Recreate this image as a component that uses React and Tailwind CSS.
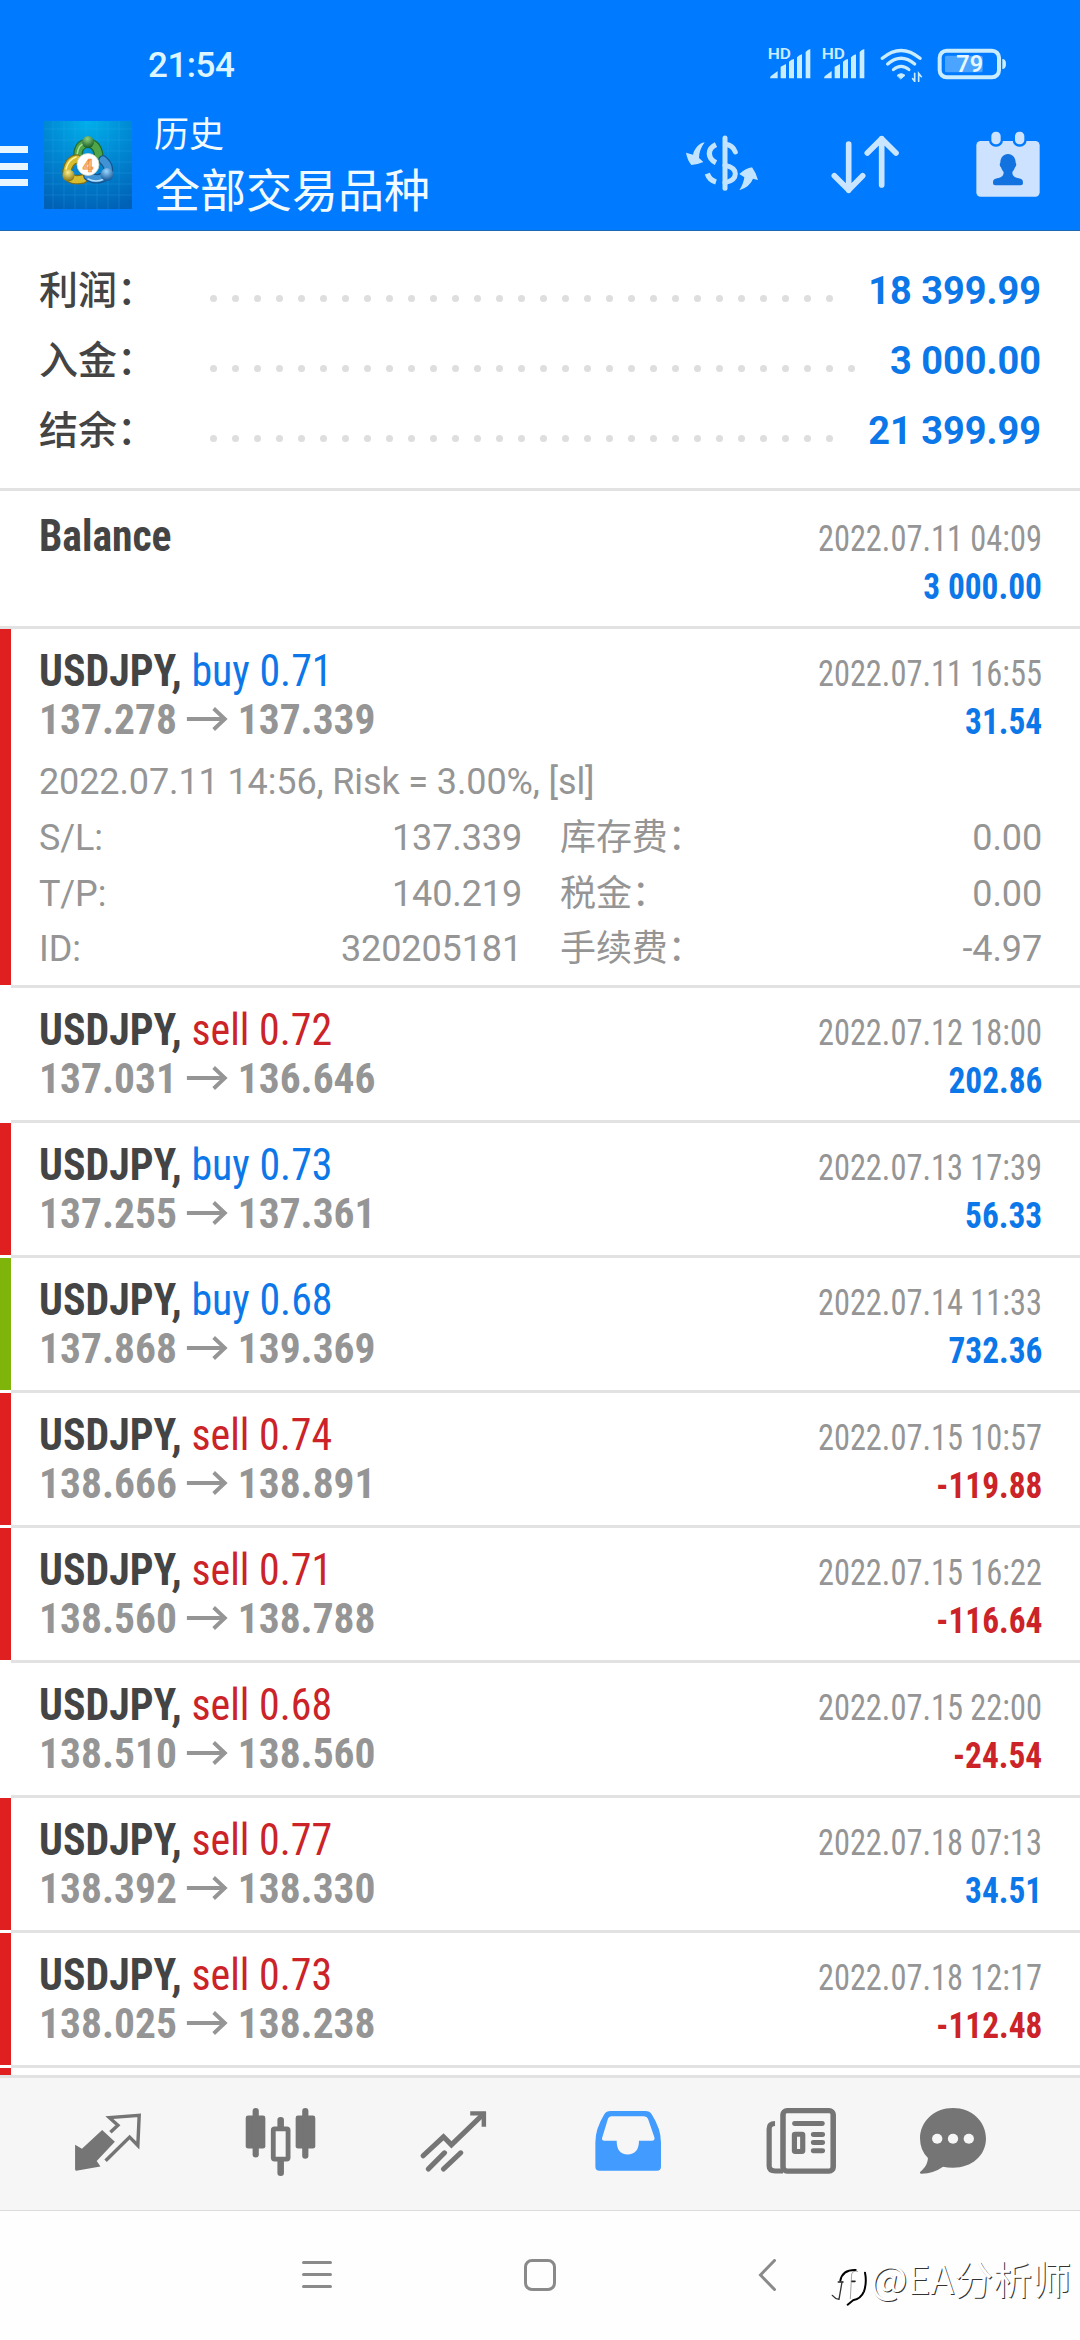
const summary = [
    { label: "利润：", value: "18 399.99", dots: 29 },
    { label: "入金：", value: "3 000.00", dots: 30 },
    { label: "结余：", value: "21 399.99", dots: 29 },
];

const deals = [
    {
        symbol: "USDJPY", side: "buy", lots: "0.71", open: "137.278", close: "137.339", time: "2022.07.11 16:55", profit: "31.54", mark: "red",
        comment: "2022.07.11 14:56, Risk = 3.00%, [sl]",
        details: [
            ["S/L:", "137.339", "库存费：", "0.00"],
            ["T/P:", "140.219", "税金：", "0.00"],
            ["ID:", "320205181", "手续费：", "-4.97"],
        ],
    },
    { symbol: "USDJPY", side: "sell", lots: "0.72", open: "137.031", close: "136.646", time: "2022.07.12 18:00", profit: "202.86" },
    { symbol: "USDJPY", side: "buy", lots: "0.73", open: "137.255", close: "137.361", time: "2022.07.13 17:39", profit: "56.33", mark: "red" },
    { symbol: "USDJPY", side: "buy", lots: "0.68", open: "137.868", close: "139.369", time: "2022.07.14 11:33", profit: "732.36", mark: "green" },
    { symbol: "USDJPY", side: "sell", lots: "0.74", open: "138.666", close: "138.891", time: "2022.07.15 10:57", profit: "-119.88", mark: "red" },
    { symbol: "USDJPY", side: "sell", lots: "0.71", open: "138.560", close: "138.788", time: "2022.07.15 16:22", profit: "-116.64", mark: "red" },
    { symbol: "USDJPY", side: "sell", lots: "0.68", open: "138.510", close: "138.560", time: "2022.07.15 22:00", profit: "-24.54" },
    { symbol: "USDJPY", side: "sell", lots: "0.77", open: "138.392", close: "138.330", time: "2022.07.18 07:13", profit: "34.51", mark: "red" },
    { symbol: "USDJPY", side: "sell", lots: "0.73", open: "138.025", close: "138.238", time: "2022.07.18 12:17", profit: "-112.48", mark: "red" },
];

const markColors = {
    red: "bg-[#e02020]",
    green: "bg-[#7fb50b]",
};

function Signal() {
    return (
        <svg className="w-[43px] h-9" viewBox="0 0 129 108" fill="#c9ecff">
            <text x="-1" y="39" fontSize="46" fontWeight="600" textLength="70" lengthAdjust="spacingAndGlyphs" fontFamily="Roboto">HD</text>
            <path d="M6 97 Q6 90 14 86 L29 75 V97Z" />
            <path d="M38 62 L54 54 V97 H38Z" />
            <path d="M63 47 Q70 40 78 39 V97 H63Z" />
            <path d="M87 34 Q94 26 102 25 V97 H87Z" />
            <path d="M113 18 Q119 10 127 9 V97 H113Z" />
        </svg>
    );
}

function Wifi() {
    return (
        <svg className="w-[43px] h-9" viewBox="0 0 129 108" fill="none" stroke="#c9ecff" strokeWidth="10" strokeLinecap="round">
            <path d="M7 37 Q63 -10 120 37" />
            <path d="M23 54 Q63 20 104 54" />
            <path d="M40 71 Q63 51 87 71" strokeWidth="9" />
            <path d="M52 88 Q63 78 75 88 L63 98Z" fill="#c9ecff" strokeWidth="3" />
            <path d="M104 82 V106 L98 98 M116 106 V82 L124 92" strokeWidth="5" />
        </svg>
    );
}

function Battery() {
    return (
        <svg className="w-[70px] h-9" viewBox="0 0 210 108">
            <rect x="8" y="14" width="178" height="80" rx="21" fill="none" stroke="#c9ecff" strokeWidth="12" />
            <rect x="24" y="29" width="113" height="50" rx="5" fill="#4ba4ff" />
            <path d="M196 39 Q207 39 207 54 Q207 69 196 69Z" fill="#c9ecff" />
            <text x="58" y="79" fontSize="69" fontWeight="600" textLength="80" lengthAdjust="spacingAndGlyphs" fontFamily="Roboto" fill="#e6f7ff">79</text>
        </svg>
    );
}

function AppLogo() {
    return (
        <svg className="w-[88px] h-[88px]" viewBox="0 0 88 88">
            <defs>
                <radialGradient id="logoBg" cx="0.5" cy="0" r="1.05">
                    <stop offset="0" stopColor="#00b0ea" />
                    <stop offset="0.5" stopColor="#0086d2" />
                    <stop offset="1" stopColor="#0061b5" />
                </radialGradient>
                <radialGradient id="green" cx="0.45" cy="0.25" r="0.75">
                    <stop offset="0" stopColor="#8fd080" />
                    <stop offset="1" stopColor="#155c24" />
                </radialGradient>
                <radialGradient id="yellow" cx="0.45" cy="0.25" r="0.75">
                    <stop offset="0" stopColor="#fdf08c" />
                    <stop offset="1" stopColor="#85700c" />
                </radialGradient>
                <radialGradient id="blue" cx="0.45" cy="0.25" r="0.75">
                    <stop offset="0" stopColor="#9ad6ff" />
                    <stop offset="1" stopColor="#0f5496" />
                </radialGradient>
            </defs>
            <rect width="88" height="88" fill="url(#logoBg)" />
            <path d="M9 0V88M20 0V88M31 0V88M42 0V88M53 0V88M64 0V88M75 0V88M0 8H88M0 19H88M0 30H88M0 41H88M0 52H88M0 63H88M0 74H88" stroke="#3db4f5" strokeWidth="0.7" opacity="0.3" />
            <g fill="none" strokeLinecap="round">
                <path d="M34 37 Q33 23 44 22 Q55 23 55 39" stroke="#1e6b2c" strokeWidth="9.500" />
                <path d="M34 37 Q33 23 44 22 Q55 23 55 39" stroke="#4fa548" strokeWidth="7" />
                <path d="M33 34 Q34 23 43 21" stroke="#a9dc9a" strokeWidth="1.500" />
                <path d="M39 58 Q23 61 23 50 Q25 39 33 38" stroke="#7d6e18" strokeWidth="9.500" />
                <path d="M39 58 Q23 61 23 50 Q25 39 33 38" stroke="#d6bd30" strokeWidth="7" />
                <path d="M22 48 Q24 39 32 36" stroke="#fff3a0" strokeWidth="1.500" />
                <path d="M59 39 Q67 46 63 54 Q53 61 44 55" stroke="#15538f" strokeWidth="9.500" />
                <path d="M59 39 Q67 46 63 54 Q53 61 44 55" stroke="#3f92d4" strokeWidth="7" />
                <path d="M44 58 Q52 62 60 58" stroke="#b9e2ff" strokeWidth="1.500" />
            </g>
            <circle cx="44" cy="21" r="6" fill="url(#green)" />
            <circle cx="24.500" cy="54.500" r="6" fill="url(#yellow)" />
            <circle cx="63" cy="53.500" r="6.500" fill="url(#blue)" />
            <circle cx="44" cy="43.500" r="11" fill="#fff" stroke="#c9d4c0" strokeWidth="0.8" />
            <text x="44" y="50.500" fontSize="19" fontWeight="700" fontFamily="Roboto" textAnchor="middle" fill="#f7c08a" stroke="#ee8a3c" strokeWidth="0.7">4</text>
        </svg>
    );
}

function CurrencyIcon() {
    return (
        <svg className="w-[74px] h-[68px]" viewBox="0 0 222 204" fill="none" stroke="#c2e4ff" strokeWidth="15" strokeLinecap="round">
            <path d="M120 24 V175" />
            <path d="M122 43 Q144 46 151 66" />
            <path d="M93 44 Q73 53 73 71 Q74 89 93 98" strokeWidth="16" strokeLinecap="butt" />
            <path d="M67 131 Q73 150 93 156" strokeLinecap="butt" strokeWidth="16" />
            <path d="M120 106 Q151 112 151 131 Q151 151 120 158" />
            <path d="M59 37 Q41 40 31 57 Q25 66 24 74 L3 68 Q7 90 19 105 Q38 104 55 96 L42 84 Q42 60 59 37Z" fill="#c2e4ff" stroke="none" />
            <path d="M163 181 Q176 160 178 142 L163 132 Q183 114 201 112 Q213 128 219 150 L204 146 Q196 169 163 181Z" fill="#c2e4ff" stroke="none" />
        </svg>
    );
}

function SortIcon() {
    return (
        <svg className="w-[71px] h-[68px]" viewBox="0 0 213 204" fill="none" stroke="#c9e5ff" strokeWidth="17" strokeLinecap="round" strokeLinejoin="round">
            <path d="M56 42 V181 M13 137 L56 180 L98 137" />
            <path d="M155 165 V26 M112 69 L155 26 L198 69" />
        </svg>
    );
}

function CalendarIcon() {
    return (
        <svg className="w-[66px] h-[68px]" viewBox="0 0 198 204">
            <rect x="4" y="33" width="190" height="167" rx="13" fill="#cce2ff" />
            <rect x="42" y="-2" width="42" height="52" rx="20" fill="#007aff" />
            <rect x="113" y="-2" width="42" height="52" rx="20" fill="#007aff" />
            <rect x="49" y="5" width="28" height="38" rx="13" fill="#cce2ff" />
            <rect x="120" y="5" width="28" height="38" rx="13" fill="#cce2ff" />
            <path d="M99 72 C113 72 122 83 122 98 C125 100 124 110 120 112 C118 119 115 123 112 126 C112 138 118 142 132 145 C143 148 144 152 144 160 Q144 166 137 166 H61 Q54 166 54 160 C54 152 55 148 66 145 C80 142 86 138 86 126 C83 123 80 119 78 112 C74 110 73 100 76 98 C76 83 85 72 99 72Z" fill="#1272e0" />
        </svg>
    );
}

function Header() {
    return (
        <header className="flex h-[231px] shrink-0 flex-col border-b border-[#1f69b3] bg-[#007aff]">
            <div className="mt-[46px] flex h-9 items-center pl-[148px] pr-[73px]">
                <span className="flex-1 pt-[3px] text-[35px] font-medium leading-9 tracking-[-0.5px] text-[#dcf5ff]">21:54</span>
                <div className="flex">
                    <Signal />
                    <div className="ml-[11px]"><Signal /></div>
                    <div className="ml-[15px]"><Wifi /></div>
                    <div className="ml-[14px]"><Battery /></div>
                </div>
            </div>
            <div className="flex flex-1 items-start pr-[39px]">
                <div className="mt-[64px] flex w-7 flex-col gap-[9.5px]">
                    <div className="h-[7px] bg-[#e8f7ff]" />
                    <div className="h-[7px] bg-[#e8f7ff]" />
                    <div className="h-[7px] bg-[#e8f7ff]" />
                </div>
                <div className="ml-4 mt-[39px]"><AppLogo /></div>
                <div className="ml-[22px] mt-[32px] flex-1 text-[#f0faff]">
                    <p className="text-[35px] leading-[44px]">历史</p>
                    <p className="mt-[5px] text-[46px] leading-[56px]">全部交易品种</p>
                </div>
                <div className="mt-12 flex">
                    <CurrencyIcon />
                    <div className="ml-[71px]"><SortIcon /></div>
                    <div className="ml-[74px]"><CalendarIcon /></div>
                </div>
            </div>
        </header>
    );
}

function Summary() {
    return (
        <section className="h-[260px] shrink-0 border-b-3 border-[#e2e2e2] pl-[39px] pr-[39px] pt-[25px]">
            {summary.map((row) => (
                <div key={row.label} className="flex h-[70px] items-center leading-[70px]">
                    <span className="w-[171px] text-[39px] font-medium text-[#444]">{row.label}</span>
                    <span className="mt-[14px] flex gap-[15px]">
                        {Array.from({ length: row.dots }, (_, i) => (
                            <i key={i} className="size-[7px] rounded-full bg-[#dedede]" />
                        ))}
                    </span>
                    <span className="flex-1 origin-right scale-x-[0.973] text-right text-[39px] font-bold text-[#0c77e8]">{row.value}</span>
                </div>
            ))}
        </section>
    );
}

function Arrow() {
    return (
        <svg className="mx-[10px] inline-block h-[26px] w-[43px] align-[3px]" viewBox="0 0 43 26" fill="none" stroke="#959595" strokeWidth="4">
            <path d="M0 14 H40 M28 3.500 L39.500 14 L28 24.500" />
        </svg>
    );
}

function Deal({ deal }) {
    return (
        <div className="flex shrink-0">
            <div className={`mb-[3px] w-[11px] ${markColors[deal.mark] || ""}`} />
            <div className="flex-1 border-b-3 border-[#e2e2e2] pl-7 pr-[38px] pt-[18px]">
                <div className="flex h-12 items-baseline justify-between font-['Roboto_Condensed','Roboto'] leading-[48px]">
                    <p className="origin-left scale-x-[0.952] text-[44px]">
                        <span className="font-bold text-[#444]">{deal.symbol}, </span>
                        <span className={deal.side === "buy" ? "text-[#0c77e8]" : "text-[#cb2328]"}>{deal.side} {deal.lots}</span>
                    </p>
                    <p className="origin-right scale-x-[0.9] text-[36px] text-[#959595]">{deal.time}</p>
                </div>
                <div className="flex h-12 items-baseline justify-between font-['Roboto_Condensed','Roboto'] font-bold leading-[48px]">
                    <p className="origin-left scale-x-[0.965] text-[43px] text-[#959595]">{deal.open}<Arrow />{deal.close}</p>
                    <p className={`origin-right scale-x-[0.927] text-[36px] ${deal.profit.startsWith("-") ? "text-[#cb2328]" : "text-[#0c77e8]"}`}>{deal.profit}</p>
                </div>
                {deal.details ? (
                    <div className="pb-[7.5px] pt-[15px] text-[36px] tracking-[-0.12px] text-[#959595]">
                        <p className="mb-[5px] h-12 leading-[48px]">{deal.comment}</p>
                        {deal.details.map(([name, value, feeName, fee]) => (
                            <div key={name} className="flex h-[55.5px] leading-[55.5px]">
                                <span>{name}</span>
                                <span className="w-0 flex-1 text-right">{value}</span>
                                <span className="ml-[38px] w-[220px]">{feeName}</span>
                                <span className="w-[262px] text-right">{fee}</span>
                            </div>
                        ))}
                    </div>
                ) : <div className="h-[18px]" />}
            </div>
        </div>
    );
}

function TabBar() {
    return (
        <nav className="flex h-[136px] shrink-0 items-start border-b border-t-3 border-b-[#dcdcdc] border-t-[#e2e2e2] bg-[#f6f6f6] pl-[72px] pt-[27px]">
            {/* quotes */}
            <svg className="h-[73px] w-[72px]" viewBox="0 0 210 220" preserveAspectRatio="none">
                <path d="M88 75 L125 111 L72 169 L83 185 L12 198 Q9 198 9 194 V120 L29 132Z" fill="#757575" />
                <path d="M112 82 L134 61 L109 38 L196 31 L192 122 L168 97 L98 168" fill="none" stroke="#757575" strokeWidth="10" />
            </svg>
            {/* chart */}
            <svg className="ml-[100px] h-[73px] w-[73px]" viewBox="0 0 212 220" preserveAspectRatio="none">
                <g fill="#757575">
                    <rect x="5" y="32" width="57" height="99" rx="7" />
                    <rect x="25" y="9" width="18" height="149" rx="9" />
                    <rect x="150" y="32" width="57" height="99" rx="7" />
                    <rect x="169" y="9" width="18" height="153" rx="9" />
                    <rect x="97" y="36" width="19" height="50" rx="9" />
                    <rect x="97" y="150" width="19" height="64" rx="9" />
                </g>
                <rect x="85" y="72" width="43" height="91" rx="4" fill="#f6f6f6" stroke="#757575" strokeWidth="14" />
            </svg>
            {/* trade */}
            <svg className="ml-[102px] h-[73px] w-[69px]" viewBox="0 0 200 220" preserveAspectRatio="none" fill="none" stroke="#757575" strokeWidth="15" strokeLinecap="round">
                <path d="M12 153 L71 96 L94 120 L186 28" />
                <path d="M155 25 H188 V59" strokeLinecap="square" strokeWidth="13" />
                <path d="M27 193 L74 144 M71 193 L121 144" />
            </svg>
            {/* history */}
            <svg className="ml-[106px] h-[73px] w-[68px]" viewBox="0 0 198 220" preserveAspectRatio="none">
                <path d="M48 18 H150 Q162 18 168 28 Q195 72 195 112 V186 Q195 198 183 198 H16 Q4 198 4 186 V112 Q4 72 30 28 Q36 18 48 18Z" fill="#429bff" />
                <path d="M52 34 H144 Q154 34 158 44 L176 98 Q178 107 169 108 H131 C131 136 119 149 98 149 C77 149 66 136 66 108 H30 Q21 107 24 98 L40 44 Q43 34 52 34Z" fill="#f6f6f6" />
            </svg>
            {/* news */}
            <svg className="ml-[103px] h-[73px] w-[72px]" viewBox="0 0 208 220" preserveAspectRatio="none" fill="none" stroke="#757575" strokeLinecap="round">
                <rect x="52" y="17" width="145" height="182" rx="12" strokeWidth="16" />
                <path d="M52 199 H30 Q12 199 12 184 V72 Q12 56 29 56" strokeWidth="15" strokeLinecap="butt" />
                <path d="M86 56 H165" strokeWidth="15" />
                <rect x="85" y="88" width="24" height="52" rx="2" strokeWidth="15" strokeLinejoin="round" />
                <path d="M140 89 H166 M140 113 H166 M140 138 H166" strokeWidth="15" />
            </svg>
            {/* messages */}
            <svg className="ml-[82px] h-[73px] w-[68px]" viewBox="0 0 198 220" preserveAspectRatio="none">
                <path d="M99 9 C153 9 195 49 195 101 C195 153 153 189 99 189 Q82 189 70 186 Q43 206 8 207 Q0 207 4 201 C18 190 26 174 26 160 Q3 136 3 101 C3 49 45 9 99 9Z" fill="#757575" />
                <circle cx="53" cy="102" r="15" fill="#f6f6f6" />
                <circle cx="99" cy="102" r="15" fill="#f6f6f6" />
                <circle cx="145" cy="102" r="15" fill="#f6f6f6" />
            </svg>
        </nav>
    );
}

function SystemBar() {
    return (
        <div className="relative flex flex-1 items-start bg-[#fefefe] pl-[302px] pt-12">
            <div className="mt-[2px] flex w-[30px] flex-col gap-[9px]">
                <div className="h-[3px] rounded bg-[#8a8a8a]" />
                <div className="h-[3px] rounded bg-[#8a8a8a]" />
                <div className="h-[3px] rounded bg-[#8a8a8a]" />
            </div>
            <div className="ml-[192px] h-8 w-[32px] rounded-[8px] border-3 border-[#8a8a8a]" />
            <svg className="ml-[202px] h-8 w-[19px]" viewBox="0 0 19 32" fill="none" stroke="#8a8a8a" strokeWidth="3" strokeLinecap="round">
                <path d="M16.500 1.500 L2.500 16 L16.500 30.500" />
            </svg>
            <div className="absolute right-[9px] top-[38px] flex items-center">
                <svg className="mr-[2px] mt-[17px] h-[39px] w-[37px] overflow-visible" viewBox="0 0 111 117" fill="none" strokeLinecap="round">
                    <path d="M28 44 Q34 11 74 12" stroke="#000" strokeWidth="6" />
                    <path d="M22 48 H36 M62 46 H72" stroke="#222" strokeWidth="5" />
                    <path d="M33 48 L24 100 Q12 98 4 88" stroke="#333" strokeWidth="4" />
                    <path d="M58 98 L62 24 Q66 13 80 16" stroke="#777" strokeWidth="2" />
                    <path d="M102 20 Q108 50 99 76 Q90 98 66 103 L50 116" stroke="#000" strokeWidth="6" />
                </svg>
                <span className="font-['Noto_Sans_CJK_SC'] text-[39px] leading-[56px] text-white [text-shadow:1px_1px_0_#333]">@EA分析师</span>
            </div>
        </div>
    );
}

export default function App() {
    return (
        <div className="flex h-[2340px] w-[1080px] flex-col overflow-hidden bg-white font-['Roboto','Noto_Sans_CJK_SC',sans-serif]">
            <Header />
            <Summary />
            <main className="flex h-[1584px] shrink-0 flex-col overflow-hidden">
                <div className="flex h-[138px] shrink-0 justify-between border-b-3 border-[#e2e2e2] pl-[39px] pr-[38px] pt-[21px] font-['Roboto_Condensed','Roboto'] leading-[48px]">
                    <p className="origin-left scale-x-[0.945] text-[44px] font-bold text-[#444]">Balance</p>
                    <div className="pt-[3px] text-right text-[36px]">
                        <p className="origin-right scale-x-[0.9] text-[#959595]">2022.07.11 04:09</p>
                        <p className="origin-right scale-x-[0.927] font-bold text-[#0c77e8]">3 000.00</p>
                    </div>
                </div>
                {deals.map((deal) => (
                    <Deal key={deal.time} deal={deal} />
                ))}
                <div className="h-[7px] w-[11px] shrink-0 bg-[#e02020]" />
            </main>
            <TabBar />
            <SystemBar />
        </div>
    );
}
